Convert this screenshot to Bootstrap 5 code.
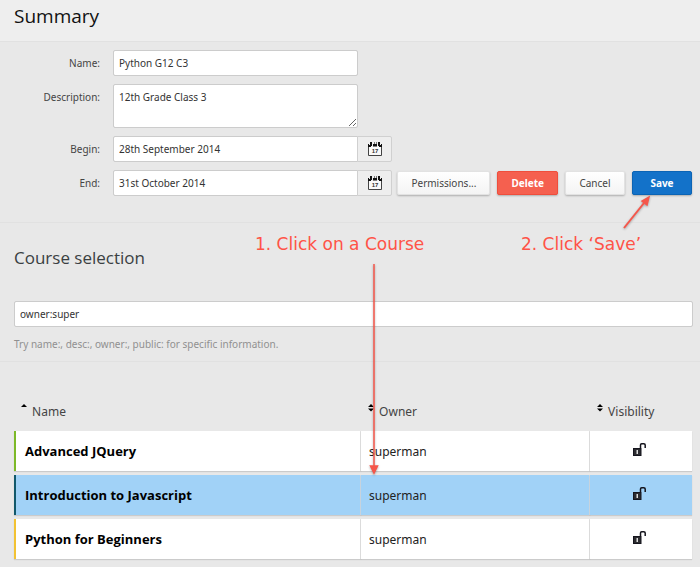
<!DOCTYPE html>
<html lang="en">
<head>
<meta charset="utf-8">
<meta name="viewport" content="width=device-width, initial-scale=1">
<title>Summary</title>
<link href="https://cdn.jsdelivr.net/npm/bootstrap@5.3.0/dist/css/bootstrap.min.css" rel="stylesheet">
<style>
body { background: #e8e8e8; color: #444; font: 10px/16px "Noto Sans", sans-serif; }
.page-title { background: #eee; border-bottom: 1px solid #e1e1e1; height: 42px; padding: 0 14px; }
.page-title h1 { font: 19px/32px "Open Sans", sans-serif; color: #111; }
.section-title { font: 400 17px/24px "Open Sans", sans-serif; color: #3a3f42; }
.summary { padding: 8px 8px 26px 0; border-bottom: 1px solid #e1e1e1; }
.summary-row { gap: 13px; }
.summary-row > label { width: 100px; flex: none; text-align: right; line-height: 26px; }
.form-control { border: 1px solid #ccc; border-radius: 2px; font-size: 10px; line-height: 16px; padding: 4px 5px; color: #333; min-height: 26px; }
textarea.form-control { min-height: 44px; height: 44px; }
.field { width: 245px; flex: none; }
.date-field { width: 279px; flex: none; }
.date-btn { width: 35px; padding: 0; border: 1px solid #d0d0d0; border-radius: 2px; background: #eee; line-height: 0; }
.actions { gap: 7px; }
.action { min-width: 60px; height: 24px; padding: 0 13px; font-size: 10px; line-height: 22px; border-radius: 2px; border: 1px solid #e2e2e2; background: linear-gradient(#fff, #f4f4f4); color: #444; box-shadow: 0 1px 2px rgba(0,0,0,.25); }
.action-red { background: #f5604f; border-color: #ef4e3c; color: #fff; font-weight: 700; }
.action-blue { background: #1372c9; border-color: #0b64b5; color: #fff; font-weight: 700; }
.filter { padding: 23px 7px 9px 14px; border-bottom: 1px solid #e1e1e1; }
.search-box { margin-top: 31px; }
.hint { color: #909090; margin-top: 9px; }
.courses { padding: 29px 8px 4px 14px; }
.course-table { width: 100%; table-layout: fixed; border-collapse: separate; border-spacing: 0 4px; font-size: 12px; line-height: 20px; }
.course-table th { font-weight: 400; height: 32px; padding: 2px 0 0 7px; color: #444; }
.course-table tbody td { height: 40px; padding: 0 9px; background: #fff; color: #222; border-right: 1px solid #e0e0e0; box-shadow: 0 1px 1px rgba(0,0,0,.12); }
.course-table tbody td:first-child { border-left: 2px solid #7db928; font: 700 13px/20px "Open Sans", sans-serif; color: #000; }
.course-table tbody td:nth-child(2) { padding: 2px 8px 0; }
.course-table tbody td:last-child { text-align: center; border-right: 0; padding: 0 12px 0 9px; }
.course-table tr.chosen td { background: #a1d2f7; border-right-color: #cbd8e2; }
.course-table tr.chosen td:first-child { border-left-color: #12586b; }
.course-table tr.starter td:first-child { border-left-color: #f2c233; }
.col-owner { width: 229px; }
.col-vis { width: 102px; }
.sort { border: 0; background: none; padding: 0; color: inherit; line-height: 20px; }
.sort svg { vertical-align: 4px; margin-right: 2px; }
.open-lock { vertical-align: -1px; }
.note { position: absolute; font: 17px/22px "DejaVu Sans", sans-serif; color: #ff5347; white-space: nowrap; }
.note-course { left: 255px; top: 233px; }
.note-save { left: 521px; top: 233px; }
.arrows { position: absolute; left: 0; top: 0; pointer-events: none; filter: drop-shadow(0 1px 1px rgba(0,0,0,.3)); }
</style>
<script src="https://cdn.jsdelivr.net/npm/bootstrap@5.3.0/dist/js/bootstrap.bundle.min.js" defer></script>
</head>
<body class="position-relative">
<svg class="d-none" aria-hidden="true">
  <symbol id="calendar" viewBox="0 0 14 14"><path d="M.5 3v10.500h13V3" fill="#fafafa" stroke="#444"/><path d="M0 2h14v3H0z" fill="#eee"/><path d="M0 2h1v3H0zM13 2h1v3h-1zM2 0h2v4H2zM10 0h2v4h-2zM5 2h4v2.500H5zM1 3h2v2H1zM11 3h2v2h-2z" fill="#111"/><path d="M6 0h1v2H6zM8 0h1v2H8z" fill="#777"/><text x="7" y="11" font-family="Liberation Sans" font-size="6" font-weight="700" text-anchor="middle" fill="#333">17</text></symbol>
  <symbol id="unlock" viewBox="0 0 13 13"><path d="M0 5h8.500v8H0z" fill="#15151d"/><path d="M1 7h6.500M1 9h6.500M1 11h6.500" stroke="#444"/><path d="M3.500 7h1.500v4H3.500z" fill="#ddd"/><path d="M7.500 5V2Q7.500.8 8.700.8h2.100Q12.200.8 12.200 2v3" fill="none" stroke="#15151d" stroke-width="1.500"/></symbol>
  <symbol id="sort-up" viewBox="0 0 6 8"><path d="M0 3l3-3 3 3z" fill="#000"/></symbol>
  <symbol id="sort-both" viewBox="0 0 6 8"><path d="M0 3l3-3 3 3zM0 4.500h6l-3 3z" fill="#000"/></symbol>
</svg>

<header class="page-title"><h1 class="m-0">Summary</h1></header>

<main>
  <form class="summary d-flex flex-column gap-2">
    <div class="summary-row d-flex"><label for="name">Name:</label><input id="name" class="form-control field" value="Python G12 C3"></div>
    <div class="summary-row d-flex"><label for="desc">Description:</label><textarea id="desc" class="form-control field">12th Grade Class 3</textarea></div>
    <div class="summary-row d-flex"><label for="begin">Begin:</label>
      <div class="input-group date-field"><input id="begin" class="form-control" value="28th September 2014"><button type="button" class="btn date-btn" aria-label="Choose begin date"><svg width="14" height="14"><use href="#calendar"/></svg></button></div>
    </div>
    <div class="d-flex">
      <div class="summary-row d-flex"><label for="end">End:</label>
        <div class="input-group date-field"><input id="end" class="form-control" value="31st October 2014"><button type="button" class="btn date-btn" aria-label="Choose end date"><svg width="14" height="14"><use href="#calendar"/></svg></button></div>
      </div>
      <div class="actions d-flex align-items-center ms-auto">
        <button type="button" class="btn action">Permissions...</button>
        <button type="button" class="btn action action-red">Delete</button>
        <button type="button" class="btn action">Cancel</button>
        <button type="submit" class="btn action action-blue">Save</button>
      </div>
    </div>
  </form>

  <section class="filter">
    <h2 class="section-title m-0">Course selection</h2>
    <input class="form-control search-box" aria-label="Search courses" value="owner:super">
    <div class="hint">Try name:, desc:, owner:, public: for specific information.</div>
  </section>

  <section class="courses">
    <table class="course-table">
      <colgroup><col><col class="col-owner"><col class="col-vis"></colgroup>
      <thead><tr>
        <th><button class="sort"><svg width="6" height="8"><use href="#sort-up"/></svg> Name</button></th>
        <th><button class="sort"><svg width="6" height="8"><use href="#sort-both"/></svg> Owner</button></th>
        <th><button class="sort"><svg width="6" height="8"><use href="#sort-both"/></svg> Visibility</button></th>
      </tr></thead>
      <tbody>
        <tr><td>Advanced JQuery</td><td>superman</td><td><svg class="open-lock" width="13" height="13" role="img" aria-label="Unlocked"><use href="#unlock"/></svg></td></tr>
        <tr class="chosen"><td>Introduction to Javascript</td><td>superman</td><td><svg class="open-lock" width="13" height="13" role="img" aria-label="Unlocked"><use href="#unlock"/></svg></td></tr>
        <tr class="starter"><td>Python for Beginners</td><td>superman</td><td><svg class="open-lock" width="13" height="13" role="img" aria-label="Unlocked"><use href="#unlock"/></svg></td></tr>
      </tbody>
    </table>
  </section>
</main>

<div class="note note-course">1. Click on a Course</div>
<div class="note note-save">2. Click ‘Save’</div>
<svg class="arrows" width="700" height="480" aria-hidden="true"><g stroke="#f5564a" stroke-width="1.500" fill="#f5564a"><path d="M374 264v204"/><path d="M370.500 466h7l-3.500 7z"/><path d="M624 228l20-25" stroke-width="2"/><path d="M649 197l-2 8-5-4z"/></g></svg>
</body>
</html>
